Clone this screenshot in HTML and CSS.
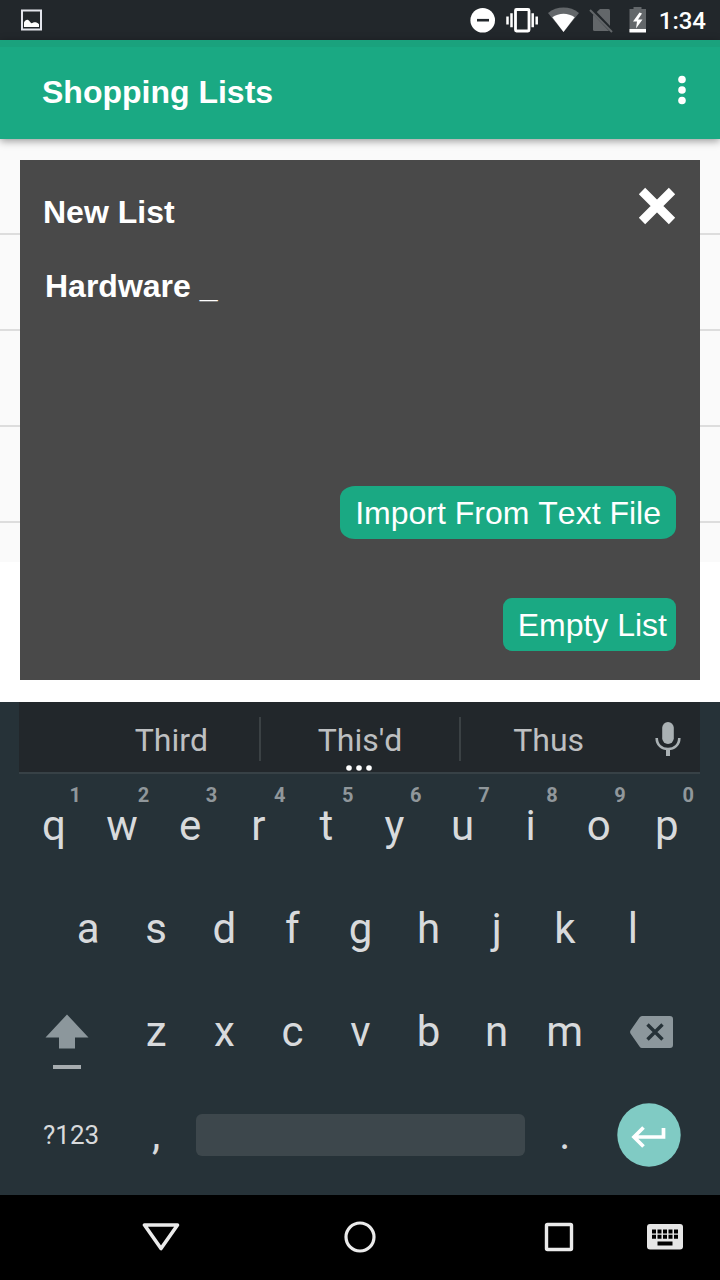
FILE: index.html
```html
<!DOCTYPE html>
<html lang="en">
<head>
<meta charset="utf-8">
<meta name="viewport" content="width=device-width, initial-scale=1">
<title>Shopping Lists</title>
<link rel="stylesheet" href="styles.css">
</head>
<body>
<div class="status-bar">
  <svg class="status-picture" viewBox="20 8 24 24" aria-hidden="true"><rect x="22" y="10.500" width="19" height="19" fill="none" stroke="#e3e5ec" stroke-width="2"/><path d="M24 27v-4.500c1-2 2.500-3 4-2.500 1.500.5 2 2.500 3.500 3.200 1.500-.7 3.500-1.500 5-.7 1 .5 2 1.200 2.500 1.800V27z" fill="#fff"/></svg>
  <div class="status-icons">
    <svg width="26" height="28" viewBox="470 6 26 28" aria-hidden="true"><circle cx="482.700" cy="20.200" r="12.300" fill="#fff"/><path d="M477 20.200h12" stroke="#22272b" stroke-width="2.600"/></svg>
    <svg width="32" height="28" viewBox="506 6 32 28" aria-hidden="true"><rect x="515.500" y="9.500" width="13.500" height="21.500" rx="1" fill="none" stroke="#fff" stroke-width="2.800"/><path d="M507.500 16.500v8M511.500 13.300v14M532.700 13.300v14M536.700 16.500v8" stroke="#fff" stroke-width="2.500"/></svg>
    <svg width="31" height="28" viewBox="548 6 31 28" aria-hidden="true"><path d="M563.500 32 548 13c9-7.300 22-7.300 31 0z" fill="#63676a"/><path d="M563.500 32 552.300 17.300c6.500-4.700 16-4.700 22.400 0z" fill="#fff"/></svg>
    <svg width="28" height="28" viewBox="589 6 28 28" aria-hidden="true"><path d="M600 9h8.500q1.500 0 1.500 1.500V31h-15.500q-1.500 0-1.500-1.500V15.500z" fill="#63676a"/><path d="m591 9 21 22" stroke="#22272b" stroke-width="4"/><path d="m590 10 22 22" stroke="#63676a" stroke-width="2"/></svg>
    <svg width="22" height="28" viewBox="626 6 22 28" aria-hidden="true"><path d="M632.500 7h8v2h4.500v23h-16.500V9h4z" fill="#63676a"/><path d="M628.500 29H645v3.500h-16.500z" fill="#fff"/><path d="m638.500 12.500-6.500 9h4l-1 7 6.500-9h-4.500l4-6z" fill="#fff"/></svg>
    <time class="clock">1:34</time>
  </div>
</div>

<header class="app-bar">
  <h1 class="app-title">Shopping Lists</h1>
  <button class="menu-button" type="button" aria-label="More options"><svg width="8" height="30" viewBox="0 0 8 30" fill="#fff" aria-hidden="true"><circle cx="4" cy="4.500" r="3.800"/><circle cx="4" cy="15" r="3.800"/><circle cx="4" cy="25.500" r="3.800"/></svg></button>
</header>

<main class="content">
  <div class="lists" aria-hidden="true">
    <div class="list-row"></div>
    <div class="list-row"></div>
    <div class="list-row"></div>
    <div class="list-row"></div>
    <div class="list-rest"></div>
  </div>
  <form class="dialog" role="dialog" aria-labelledby="dialog-title">
    <div class="dialog-head">
      <h2 class="dialog-title" id="dialog-title">New List</h2>
      <button class="close-button" type="button" aria-label="Close"><svg width="38" height="38" viewBox="0 0 38 38" aria-hidden="true"><path d="m4 4 30 30M34 4 4 34" stroke="#fff" stroke-width="9"/></svg></button>
    </div>
    <input class="name-input" type="text" aria-label="List name" value="Hardware _">
    <div class="dialog-actions">
      <button class="action action-import" type="button">Import From Text File</button>
      <button class="action action-empty" type="button">Empty List</button>
    </div>
  </form>
</main>

<section class="keyboard" aria-label="Keyboard">
  <div class="suggestions">
    <button class="suggestion suggestion-first" type="button">Third</button>
    <button class="suggestion suggestion-main" type="button">This'd<svg class="more-dots" width="26" height="6" viewBox="0 0 26 6" fill="#fff" aria-hidden="true"><circle cx="3" cy="3" r="2.800"/><circle cx="13" cy="3" r="2.800"/><circle cx="23" cy="3" r="2.800"/></svg></button>
    <button class="suggestion" type="button">Thus</button>
    <button class="suggestion-mic" type="button" aria-label="Voice input"><svg width="26" height="36" viewBox="0 0 26 36" aria-hidden="true"><rect x="7.200" y="0" width="11.600" height="22" rx="5.800" fill="#aab1b4"/><path d="M1.700 16c0 7 5 11 11.300 11s11.300-4 11.300-11" fill="none" stroke="#aab1b4" stroke-width="2.600"/><path d="M13 27v7" stroke="#aab1b4" stroke-width="4"/></svg></button>
  </div>
  <div class="key-row">
    <button class="key" type="button">q<span class="hint">1</span></button>
    <button class="key" type="button">w<span class="hint">2</span></button>
    <button class="key" type="button">e<span class="hint">3</span></button>
    <button class="key" type="button">r<span class="hint">4</span></button>
    <button class="key" type="button">t<span class="hint">5</span></button>
    <button class="key" type="button">y<span class="hint">6</span></button>
    <button class="key" type="button">u<span class="hint">7</span></button>
    <button class="key" type="button">i<span class="hint">8</span></button>
    <button class="key" type="button">o<span class="hint">9</span></button>
    <button class="key" type="button">p<span class="hint">0</span></button>
  </div>
  <div class="key-row key-row-inset">
    <button class="key" type="button">a</button>
    <button class="key" type="button">s</button>
    <button class="key" type="button">d</button>
    <button class="key" type="button">f</button>
    <button class="key" type="button">g</button>
    <button class="key" type="button">h</button>
    <button class="key" type="button">j</button>
    <button class="key" type="button">k</button>
    <button class="key" type="button">l</button>
  </div>
  <div class="key-row">
    <button class="key key-wide" type="button" aria-label="Shift"><svg class="shift-icon" width="44" height="76" viewBox="45 993 44 76" aria-hidden="true"><path d="M67 1013.500 88.500 1036.500H75v11H59v-11H45.500z" fill="#8c979c"/><path d="M53 1064h28v4H53z" fill="#a6acaf"/></svg></button>
    <button class="key" type="button">z</button>
    <button class="key" type="button">x</button>
    <button class="key" type="button">c</button>
    <button class="key" type="button">v</button>
    <button class="key" type="button">b</button>
    <button class="key" type="button">n</button>
    <button class="key" type="button">m</button>
    <button class="key key-wide" type="button" aria-label="Delete"><svg class="delete-icon" width="43" height="32" viewBox="0 0 43 32" aria-hidden="true"><path d="M12 0h28q3 0 3 3v26q0 3-3 3H12q-1.500 0-2.500-1.500L.5 17.500q-.8-1.500 0-3L9.500 1.500Q10.500 0 12 0z" fill="#8c979c"/><path d="m17.500 8.500 15 15M32.500 8.500l-15 15" stroke="#263238" stroke-width="3.400"/></svg></button>
  </div>
  <div class="key-row">
    <button class="key key-wide key-symbols" type="button">?123</button>
    <button class="key" type="button">,</button>
    <button class="key key-space" type="button" aria-label="Space"><span class="space-bar"></span></button>
    <button class="key" type="button">.</button>
    <button class="key key-wide" type="button" aria-label="Enter"><svg class="enter-icon" width="64" height="64" viewBox="0 0 64 64" aria-hidden="true"><circle cx="32" cy="32" r="31.700" fill="#80cbc4"/><path d="M46.500 25v9H17M26.500 24.500 17 34l9.500 9.500" fill="none" stroke="#fff" stroke-width="3.700"/></svg></button>
  </div>
</section>

<nav class="nav-bar" aria-label="System navigation">
  <div class="nav-main">
    <button class="nav-button" type="button" aria-label="Back"><svg width="38" height="30" viewBox="0 0 38 30" aria-hidden="true"><path d="M2.500 3h33L19 26.500z" fill="none" stroke="#ebebeb" stroke-width="3.600" stroke-linejoin="round"/></svg></button>
    <button class="nav-button" type="button" aria-label="Home"><svg width="32" height="32" viewBox="0 0 32 32" aria-hidden="true"><circle cx="16" cy="16" r="14" fill="none" stroke="#ebebeb" stroke-width="3.200"/></svg></button>
    <button class="nav-button" type="button" aria-label="Recent apps"><svg width="30" height="30" viewBox="0 0 30 30" aria-hidden="true"><rect x="2.500" y="2.500" width="25" height="25" rx="1" fill="none" stroke="#ebebeb" stroke-width="3.400"/></svg></button>
  </div>
  <button class="nav-button" type="button" aria-label="Choose keyboard"><svg width="36" height="26" viewBox="0 0 36 26" aria-hidden="true"><rect width="36" height="25.500" rx="3" fill="#e6e6e6"/><path d="M5 7.500h26M5 12.800h26" stroke="#000" stroke-width="4" stroke-dasharray="4 1.500"/><path d="M10.500 19.500h15" stroke="#000" stroke-width="4"/></svg></button>
</nav>
</body>
</html>
```
FILE: styles.css
```css
* {
  box-sizing: border-box;
}

body {
  display: flex;
  flex-direction: column;
  min-height: 100vh;
  margin: 0;
  background: #fff;
  font-family: "Liberation Sans", Arial, sans-serif;
  font-size: 32px;
  font-kerning: none;
}

h1,
h2 {
  margin: 0;
  font-size: 32px;
  line-height: 36px;
}

button {
  display: flex;
  align-items: center;
  justify-content: center;
  margin: 0;
  padding: 0;
  border: 0;
  background: none;
  color: inherit;
  font: inherit;
  font-kerning: none;
}

svg {
  display: block;
  flex: none;
}

.status-bar {
  display: flex;
  align-items: center;
  justify-content: space-between;
  height: 40px;
  padding: 0 14px 0 20px;
  background: #22272b;
}

.status-picture {
  width: 24px;
  height: 24px;
}

.status-icons {
  display: flex;
  align-items: center;
  gap: 10px;
}

.clock {
  padding-top: 2px;
  color: #fff;
  font-family: Roboto, sans-serif;
  font-size: 24px;
  font-weight: 500;
  line-height: 30px;
}

.app-bar {
  position: relative;
  z-index: 1;
  display: flex;
  align-items: center;
  justify-content: space-between;
  height: 99px;
  padding: 0 20px 2px 42px;
  border-top: 7px solid #1aa27d;
  background: #1aa983;
  box-shadow: 0 2px 8px rgba(0, 0, 0, 0.4);
  color: #fff;
}

.menu-button {
  width: 37px;
  height: 64px;
  margin-bottom: 4px;
}

.content {
  display: grid;
  flex: 1;
}

.lists,
.dialog {
  grid-area: 1 / 1;
}

.list-row {
  height: 96px;
  border-bottom: 2px solid #ddd;
  background: #fafafa;
}

.list-rest {
  height: 39px;
  background: #fafafa;
}

.dialog {
  display: flex;
  flex-direction: column;
  margin: 21px 20px 22px;
  padding: 27px 24px 29px 23px;
  background: #494949;
  color: #fff;
}

.dialog-head {
  display: flex;
  justify-content: space-between;
}

.dialog-title {
  padding-top: 7px;
}

.close-button {
  width: 38px;
  height: 38px;
}

.name-input {
  width: 100%;
  height: 36px;
  margin-top: 38px;
  padding: 0 2px;
  border: 0;
  outline: 0;
  background: none;
  color: inherit;
  font: inherit;
  font-weight: bold;
}

.dialog-actions {
  display: flex;
  flex: 1;
  flex-direction: column;
  align-items: flex-end;
  justify-content: flex-end;
  gap: 59px;
}

.action {
  height: 53px;
  background: #1aa983;
}

.action-import {
  padding: 2px 15px 0;
  border-radius: 15px / 12px;
}

.action-empty {
  padding: 2px 9px 0 15px;
  border-radius: 9px;
}

.keyboard {
  padding: 0 19px 9px 20px;
  background: #263238;
  color: #d8dadc;
  font-family: Roboto, sans-serif;
}

.suggestions {
  display: flex;
  height: 72px;
  padding: 5px 0 0 65px;
  border-bottom: 2px solid #374146;
  margin: 0 1px 0 -1px;
  background: #22272b;
  color: #bdbfc1;
}

.suggestion {
  position: relative;
  flex: 22;
  margin: 10px 0 11px;
  padding-top: 2px;
}

.suggestion-main {
  flex: 25;
  border: solid #3b4144;
  border-width: 0 2px;
}

.more-dots {
  position: absolute;
  bottom: -10px;
  left: 50%;
  margin-left: -14px;
}

.suggestion-mic {
  width: 64px;
}

.key-row {
  display: flex;
}

.key-row-inset {
  padding: 0 34px;
}

.key {
  position: relative;
  flex: 2;
  height: 103px;
  font-size: 42px;
}

.key-wide {
  flex: 3;
}

.shift-icon {
  margin-right: 8px;
}

.delete-icon {
  margin-left: 4px;
}

.enter-icon {
  margin-right: 2px;
}

.key-symbols {
  font-size: 26px;
}

.key-space {
  flex: 10;
}

.space-bar {
  flex: 1;
  height: 42px;
  margin: 0 6px;
  border-radius: 6px;
  background: #3d474c;
}

.hint {
  position: absolute;
  top: 9px;
  right: 7px;
  color: #90979b;
  font-size: 20px;
  font-weight: bold;
  line-height: 24px;
}

.nav-bar {
  display: flex;
  align-items: center;
  gap: 18px;
  height: 85px;
  padding: 0 11px 2px 117px;
  background: #000;
}

.nav-main {
  display: flex;
  flex: 1;
  justify-content: space-between;
}

.nav-button {
  width: 88px;
  height: 64px;
}
```
